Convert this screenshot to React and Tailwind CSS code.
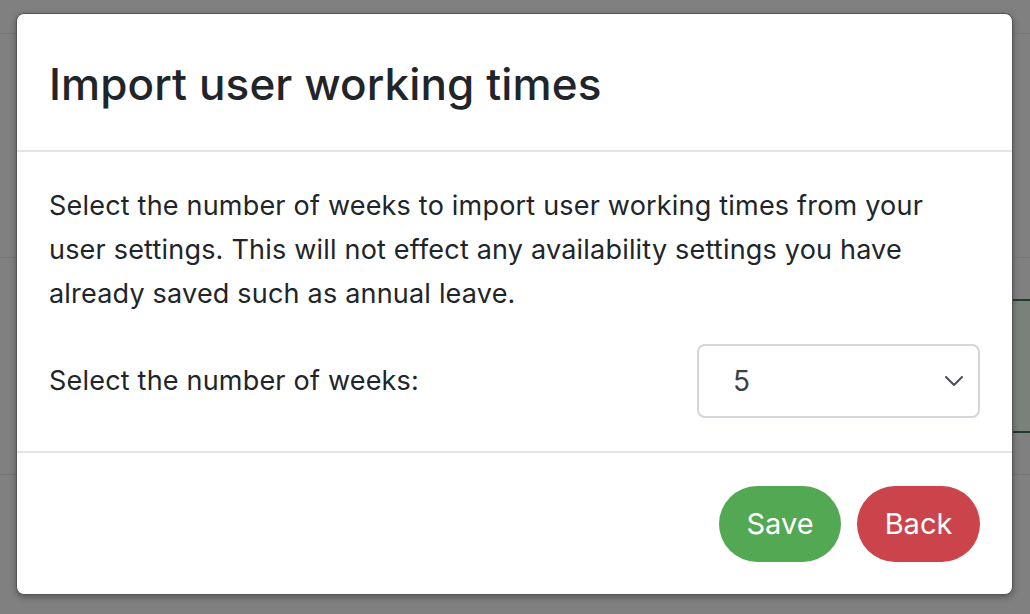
export default function App() {
  return (
    <div
      className="relative h-[614px] w-[1030px] overflow-hidden bg-[#808080]"
      style={{ fontFamily: "Inter, 'Noto Sans', sans-serif" }}
    >
      {/* faint page behind the overlay */}
      <div className="absolute left-0 top-[33px] h-px w-full bg-[#767676]" />
      <div className="absolute left-0 top-[257px] h-px w-full bg-[#767676]" />
      <div className="absolute left-0 top-[474px] h-px w-full bg-[#767676]" />
      <div className="absolute right-0 top-[299px] h-[134px] w-[30px] border-y-2 border-[#1f3d2c] bg-[#7a807a]" />

      <div className="absolute left-[16px] top-[13px] flex h-[582px] w-[997px] flex-col rounded-[8px] border border-[#555] bg-white shadow-[0_2px_6px_rgba(0,0,0,0.35)]">
        <div className="flex h-[138px] items-center border-b-2 border-[#e2e5e8] px-[32px] pt-[4px]">
          <h1 className="text-[44px] font-medium leading-none tracking-[0.1px] text-[#212529]">
            Import user working times
          </h1>
        </div>

        <div className="flex flex-1 flex-col border-b-2 border-[#e2e5e8] px-[32px] pt-[32px]">
          <p className="text-[27px] leading-[44px] tracking-[0.2px] text-[#212529]">
            Select the number of weeks to import user working times from your user settings. This will not effect any
            availability settings you have already saved such as annual leave.
          </p>
          <div className="mt-[28px] flex items-center justify-between">
            <span className="text-[27px] tracking-[0.2px] text-[#212529]">Select the number of weeks:</span>
            <div className="flex h-[74px] w-[283px] items-center justify-between rounded-[8px] border-2 border-[#d3d6da] pl-[34px] pr-[14px]">
              <span className="text-[28px] text-[#3a3f44]">5</span>
              <svg width="20" height="12" viewBox="0 0 20 12" fill="none">
                <path d="M2 2l8 8 8-8" stroke="#4a4f55" strokeWidth="2" strokeLinecap="round" strokeLinejoin="round" />
              </svg>
            </div>
          </div>
        </div>

        <div className="flex h-[141px] items-center justify-end gap-[16px] px-[32px]">
          <button className="h-[76px] w-[122px] rounded-full bg-[#53a853] text-[29px] text-white">Save</button>
          <button className="h-[76px] w-[123px] rounded-full bg-[#cc444b] text-[29px] text-white">Back</button>
        </div>
      </div>
    </div>
  );
}
